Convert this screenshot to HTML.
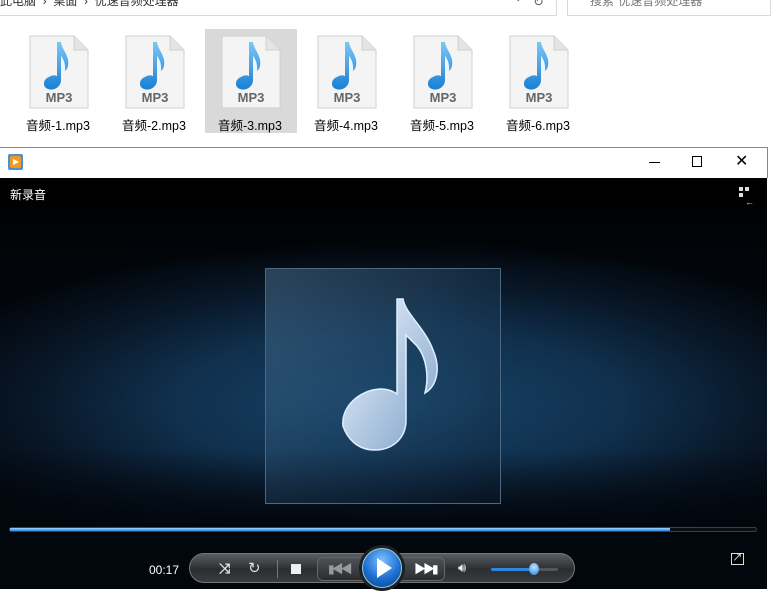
<!DOCTYPE html>
<html><head><meta charset="utf-8"><style>
*{margin:0;padding:0;box-sizing:border-box}
body{width:771px;height:589px;overflow:hidden;background:#fff;position:relative;font-family:"Liberation Sans","Noto Sans CJK SC",sans-serif}
.abs{position:absolute}
.file{position:absolute;top:29px;width:92px;height:104px}
</style></head><body>
<div class="abs" style="left:0;top:0;width:557px;height:16px;border-bottom:1px solid #d9d9d9;border-right:1px solid #d9d9d9"></div>
<div class="abs" style="left:0;top:-8px;font-size:12px;color:#333;white-space:nowrap">此电脑 &nbsp;›&nbsp; 桌面 &nbsp;›&nbsp; 优速音频处理器</div>
<div class="abs" style="left:514px;top:-7px;font-size:10px;color:#666">⌄</div>
<div class="abs" style="left:533px;top:-6px;font-size:13px;color:#666">↻</div>
<div class="abs" style="left:567px;top:0;width:204px;height:16px;border:1px solid #d9d9d9;border-top:none"></div>
<div class="abs" style="left:590px;top:-8px;font-size:12px;color:#777;white-space:nowrap">搜索"优速音频处理器"</div>
<div class="file" style="left:205px;background:#d9d9d9"></div>
<svg class="abs" style="left:0;top:0" width="771" height="140">
<defs>
<linearGradient id="nb" x1="0" y1="0" x2="0" y2="1"><stop offset="0" stop-color="#7cc8f5"/><stop offset="1" stop-color="#1a7fd4"/></linearGradient>
<g id="d">
<path d="M0 0 H44 L58 14 V72 H0 Z" fill="#f4f4f4" stroke="#cfcfcf"/>
<path d="M44 0 V14 H58" fill="#e4e4e4" stroke="#cfcfcf"/>
<path d="M27 6 H31 C32 14 40 20 38 30 C37 34 35 35 35 35 C36 28 33 22 31 20 V44 C31 51 24 55 18 53 C12 51 13 43 19 41 C22 39 25 39 27 40 Z" fill="url(#nb)"/>
<text x="29" y="66" text-anchor="middle" font-family="Liberation Sans" font-weight="bold" font-size="13" fill="#666">MP3</text>
</g></defs>
<use href="#d" x="30" y="36"/><use href="#d" x="126" y="36"/><use href="#d" x="222" y="36"/><use href="#d" x="318" y="36"/><use href="#d" x="414" y="36"/><use href="#d" x="510" y="36"/>
</svg>
<div class="abs" style="left:26px;top:115px;font-size:12.5px">音频-1.mp3</div>
<div class="abs" style="left:122px;top:115px;font-size:12.5px">音频-2.mp3</div>
<div class="abs" style="left:218px;top:115px;font-size:12.5px">音频-3.mp3</div>
<div class="abs" style="left:314px;top:115px;font-size:12.5px">音频-4.mp3</div>
<div class="abs" style="left:410px;top:115px;font-size:12.5px">音频-5.mp3</div>
<div class="abs" style="left:506px;top:115px;font-size:12.5px">音频-6.mp3</div>
<div class="abs" style="left:0;top:147px;width:768px;height:442px;border:1px solid #888;border-left:none;background:#fff"></div>
<div class="abs" style="left:8px;top:154px;width:15px;height:16px;background:#4b8fd6;border-radius:2px"></div>
<div class="abs" style="left:10px;top:156px;width:11px;height:12px;background:#f39a1e;border-radius:2px"></div>
<div class="abs" style="left:13px;top:159px;width:0;height:0;border-left:6px solid #fff;border-top:3px solid transparent;border-bottom:3px solid transparent"></div>
<div class="abs" style="left:649px;top:162px;width:11px;height:1px;background:#000"></div>
<div class="abs" style="left:692px;top:156px;width:10px;height:11px;border:1px solid #000"></div>
<div class="abs" style="left:735px;top:151px;font-size:16px;color:#000;font-weight:300">✕</div>
<div class="abs" style="left:0;top:178px;width:767px;height:411px;background:radial-gradient(ellipse 65% 40% at 52% 55%,#174468 0%,#10304d 45%,#081626 75%,#02060b 100%)"></div>
<div class="abs" style="left:0;top:178px;width:767px;height:90px;background:linear-gradient(#000 20%,rgba(0,0,0,0))"></div>
<div class="abs" style="left:0;top:450px;width:767px;height:139px;background:linear-gradient(rgba(2,6,12,0),#02070e 55%)"></div>
<div class="abs" style="left:767px;top:178px;width:4px;height:411px;background:#fff"></div>
<div class="abs" style="left:10px;top:186px;font-size:12px;color:#fff">新录音</div>
<div class="abs" style="left:739px;top:187px;width:4px;height:4px;background:#ddd;box-shadow:6px 0 #ddd,0 6px #ddd"></div>
<div class="abs" style="left:745px;top:197px;font-size:9px;color:#ddd">←</div>
<div class="abs" style="left:265px;top:268px;width:236px;height:236px;border:1px solid #4e6880;background:linear-gradient(135deg,rgba(90,130,165,.45),rgba(40,80,115,.35) 50%,rgba(10,25,45,.4))"></div>
<svg class="abs" style="left:265px;top:268px" width="236" height="236">
<defs><linearGradient id="ng" x1="0" y1="0" x2="1" y2="1"><stop offset="0" stop-color="#f0f8ff"/><stop offset="1" stop-color="#7d9fc8"/></linearGradient></defs>
<path d="M132 31 H138 C140 45 160 60 168 82 C176 100 172 118 160 125 C164 110 162 90 152 78 L141 67 V152 C141 170 128 182 110 182 C92 182 82 170 78 158 C76 138 95 122 115 121 C122 121 128 123 132 126 Z" fill="url(#ng)" stroke="#dff0ff" stroke-width="1.5"/>
</svg>
<div class="abs" style="left:9px;top:527px;width:748px;height:5px;border:1px solid #3a4048;border-radius:3px;background:#0b0f15"></div>
<div class="abs" style="left:10px;top:528px;width:660px;height:3px;background:linear-gradient(#9fd4ff,#2d86e0)"></div>
<div class="abs" style="left:149px;top:563px;font-size:12px;color:#fff">00:17</div>
<div class="abs" style="left:189px;top:553px;width:386px;height:30px;border-radius:15px;border:1px solid #777;background:linear-gradient(#5a5d62,#2b2d31 55%,#3a3c40)"></div>
<div class="abs" style="left:219px;top:560px;font-size:14px;color:#ddd;font-weight:bold">⤨</div>
<div class="abs" style="left:248px;top:559px;font-size:15px;color:#ddd">↻</div>
<div class="abs" style="left:277px;top:560px;width:1px;height:18px;background:#777"></div>
<div class="abs" style="left:291px;top:564px;width:10px;height:10px;background:#eee"></div>
<div class="abs" style="left:317px;top:557px;width:128px;height:24px;border-radius:6px;border:1px solid #666;background:linear-gradient(#4e5156,#2a2c30)"></div>
<div class="abs" style="left:328px;top:560px;font-size:12px;color:#999;letter-spacing:-3px">▮◀◀</div>
<div class="abs" style="left:414px;top:560px;font-size:12px;color:#fff;letter-spacing:-3px">▶▶▮</div>
<div class="abs" style="left:359px;top:545px;width:46px;height:46px;border-radius:50%;background:#1d2126"></div>
<div class="abs" style="left:362px;top:548px;width:40px;height:40px;border-radius:50%;background:radial-gradient(circle at 50% 30%,#7cc0ff,#1d6fd1 55%,#0a3f8a);border:1px solid #9cc"></div>
<div class="abs" style="left:377px;top:558px;width:0;height:0;border-left:15px solid #fff;border-top:10px solid transparent;border-bottom:10px solid transparent"></div>
<div class="abs" style="left:458px;top:560px;font-size:13px;color:#eee">🔊︎</div>
<div class="abs" style="left:491px;top:568px;width:67px;height:3px;border-radius:2px;background:linear-gradient(90deg,#2d86e0 65%,#555 65%)"></div>
<div class="abs" style="left:529px;top:563px;width:10px;height:12px;border-radius:50%;background:radial-gradient(circle at 50% 35%,#bfe3ff,#2d7fd8)"></div>
<div class="abs" style="left:731px;top:553px;width:13px;height:12px;border:1px solid #ddd;background:#000;color:#fff;font-size:10px;line-height:10px;text-align:center">↗</div>
</body></html>
